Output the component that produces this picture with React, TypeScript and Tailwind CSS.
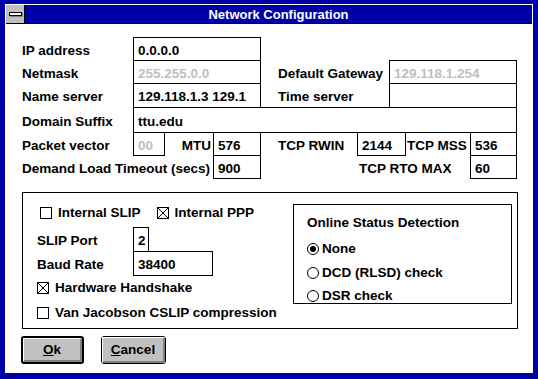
import type { ReactNode } from "react";

function Field({ w, dim, children }: { w: string; dim?: boolean; children?: ReactNode }) {
  return (
    <div className={`${w} h-full shrink-0 border border-black px-[4px] pt-[3px] flex items-center leading-none whitespace-nowrap ${dim ? "text-[#c0c0c0]" : ""}`}>
      {children}
    </div>
  );
}

function Label({ w, className = "", children }: { w: string; className?: string; children: ReactNode }) {
  return <span className={`${w} shrink-0 pt-[3px] leading-none whitespace-nowrap ${className}`}>{children}</span>;
}

function Check({ on }: { on?: boolean }) {
  return (
    <svg width="12" height="12" viewBox="0 0 12 12" className="shrink-0" shapeRendering="crispEdges">
      <rect x="0.5" y="0.5" width="11" height="11" fill="white" stroke="black" />
      {on && (
        <>
          <line x1="1" y1="1" x2="11" y2="11" stroke="black" shapeRendering="auto" />
          <line x1="11" y1="1" x2="1" y2="11" stroke="black" shapeRendering="auto" />
        </>
      )}
    </svg>
  );
}

function Radio({ on }: { on?: boolean }) {
  return (
    <svg width="12" height="12" viewBox="0 0 12 12" className="shrink-0">
      <circle cx="6" cy="6" r="5.5" fill="white" stroke="black" />
      {on && <circle cx="6" cy="6" r="3" fill="black" />}
    </svg>
  );
}

function WinButton({ def, w, children }: { def?: boolean; w: string; children: ReactNode }) {
  return (
    <div className={`${w} h-[28px] rounded-[3px] border-black bg-[#c0c0c0] ${def ? "border-2" : "border"}`}>
      <div className="h-full w-full border-t border-l border-b-2 border-r-2 border-t-white border-l-white border-b-[#808080] border-r-[#808080] flex items-center justify-center pt-[1px]">
        {children}
      </div>
    </div>
  );
}

export default function App() {
  return (
    <div className="w-[538px] h-[379px] bg-[#0000a8] pt-[4px] pl-[5px] pr-[5px] pb-[6px] font-['Liberation_Sans',Arial,sans-serif] font-bold text-[13.5px] text-black">
      <div className="h-full bg-white border border-white flex flex-col">
        {/* title bar */}
        <div className="h-[19px] shrink-0 flex border-b border-black">
          <div className="w-[19px] h-full bg-[#c0c0c0] border-r border-black flex items-center justify-center">
            <div className="w-[13px] h-[4px] border border-black bg-white shadow-[1px_1px_0_#808080]" />
          </div>
          <div className="flex-1 bg-[#0000a8] text-white flex items-center justify-center leading-none text-[13px] pt-[1px]">
            Network Configuration
          </div>
        </div>

        <div className="pl-[16px] pt-[13px] flex flex-col">
          <div className="h-[24px] flex items-center">
            <Label w="w-[111px]">IP address</Label>
            <Field w="w-[128px]">0.0.0.0</Field>
          </div>
          <div className="h-[24px] -mt-px flex items-center">
            <Label w="w-[111px]">Netmask</Label>
            <Field w="w-[128px]" dim>255.255.0.0</Field>
            <Label w="w-[111px]" className="ml-[17px]">Default Gateway</Label>
            <Field w="w-[128px]" dim>129.118.1.254</Field>
          </div>
          <div className="h-[25px] -mt-px flex items-center">
            <Label w="w-[111px]">Name server</Label>
            <Field w="w-[128px]">129.118.1.3 129.1</Field>
            <Label w="w-[111px]" className="ml-[17px]">Time server</Label>
            <Field w="w-[128px]" />
          </div>
          <div className="h-[26px] -mt-px flex items-center">
            <Label w="w-[111px]">Domain Suffix</Label>
            <Field w="w-[384px]">ttu.edu</Field>
          </div>
          <div className="h-[24px] -mt-px flex items-center">
            <Label w="w-[111px]">Packet vector</Label>
            <Field w="w-[32px]" dim>00</Field>
            <Label w="w-[48px]" className="text-right pr-[2px]">MTU</Label>
            <Field w="w-[48px]">576</Field>
            <Label w="w-[79px]" className="ml-[17px]">TCP RWIN</Label>
            <Field w="w-[49px]">2144</Field>
            <Label w="w-[64px]" className="pl-[1px]">TCP MSS</Label>
            <Field w="w-[47px]">536</Field>
          </div>
          <div className="h-[24px] -mt-px flex items-center">
            <Label w="w-[191px]">Demand Load Timeout (secs)</Label>
            <Field w="w-[48px]">900</Field>
            <Label w="w-[111px]" className="ml-[98px]">TCP RTO MAX</Label>
            <Field w="w-[47px]">60</Field>
          </div>

          {/* lower group */}
          <div className="mt-[13px] w-[496px] h-[137px] border border-black flex">
            <div className="flex-1 flex flex-col pl-[14px] pt-[12px]">
              <div className="h-[16px] flex items-center ml-[3px]">
                <Check />
                <span className="ml-[6px]">Internal SLIP</span>
                <span className="ml-[16px]"><Check on /></span>
                <span className="ml-[6px]">Internal PPP</span>
              </div>
              <div className="h-[25px] mt-[6px] flex items-center">
                <Label w="w-[96px]">SLIP Port</Label>
                <Field w="w-[16px]">2</Field>
              </div>
              <div className="h-[25px] -mt-px flex items-center">
                <Label w="w-[96px]">Baud Rate</Label>
                <Field w="w-[80px]">38400</Field>
              </div>
              <div className="h-[16px] mt-[4px] flex items-center">
                <Check on />
                <span className="ml-[6px]">Hardware Handshake</span>
              </div>
              <div className="h-[16px] mt-[9px] flex items-center">
                <Check />
                <span className="ml-[6px]">Van Jacobson CSLIP compression</span>
              </div>
            </div>
            <div className="w-[219px] h-[100px] mt-[11px] mr-[5px] border border-black flex flex-col pl-[13px] pt-[10px]">
              <div className="h-[16px] flex items-center">Online Status Detection</div>
              <div className="h-[16px] mt-[10px] flex items-center">
                <Radio on />
                <span className="ml-[3px]">None</span>
              </div>
              <div className="h-[16px] mt-[8px] flex items-center">
                <Radio />
                <span className="ml-[3px]">DCD (RLSD) check</span>
              </div>
              <div className="h-[16px] mt-[7px] flex items-center">
                <Radio />
                <span className="ml-[3px]">DSR check</span>
              </div>
            </div>
          </div>

          {/* buttons */}
          <div className="mt-[7px] -ml-px flex gap-[17px]">
            <WinButton def w="w-[63px]">
              <span><u>O</u>k</span>
            </WinButton>
            <WinButton w="w-[65px]">
              <span><u>C</u>ancel</span>
            </WinButton>
          </div>
        </div>
      </div>
    </div>
  );
}
